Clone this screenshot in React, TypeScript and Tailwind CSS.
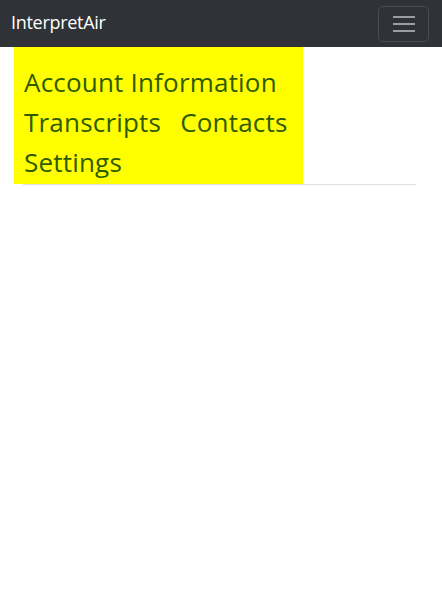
import React from 'react';

const LINKS = ['Account Information', 'Transcripts', 'Contacts', 'Settings'];

export default function App() {
  return (
    <div className="min-h-[602px] bg-white" style={{ fontFamily: '"Open Sans", "Noto Sans", sans-serif' }}>
      {/* Navbar */}
      <nav className="flex h-[47px] items-center justify-between bg-[#2f3236] pl-[11px] pr-[13px]">
        <span className="-mt-[2px] text-[18px] tracking-[-0.3px] text-white">InterpretAir</span>
        <button className="flex h-[36px] w-[51px] flex-col items-center justify-center gap-[5px] rounded-[5px] border border-[#4a4d52]">
          <span className="block h-[2px] w-[22px] bg-[#9b9ea1]" />
          <span className="block h-[2px] w-[22px] bg-[#9b9ea1]" />
          <span className="block h-[2px] w-[22px] bg-[#9b9ea1]" />
        </button>
      </nav>

      {/* Tabs */}
      <div className="relative ml-[23px] w-[393px] border-b border-[#dee2e6]">
        <div className="-ml-[9px] flex w-[289px] flex-wrap gap-x-[19px] bg-[#ffff00] pb-[2px] pl-[10px] pt-[15px]">
          {LINKS.map((l) => (
            <a key={l} className="block h-[40px] text-[26px] leading-[40px] tracking-[0.2px] text-[#2e5b00]">
              {l}
            </a>
          ))}
        </div>
      </div>
    </div>
  );
}
